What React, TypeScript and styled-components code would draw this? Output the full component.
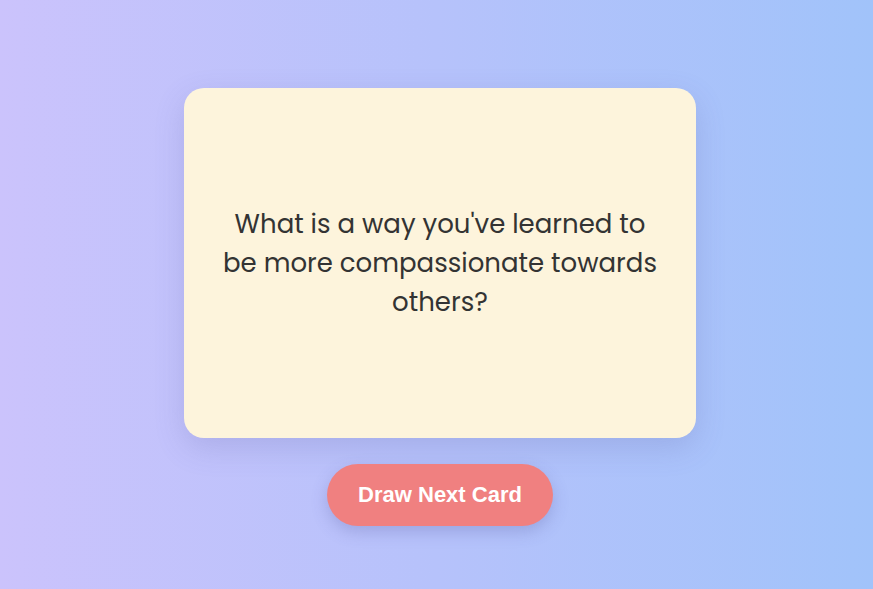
import React from "react";
import styled, { createGlobalStyle } from "styled-components";

const Global = createGlobalStyle`
  html, body { margin: 0; padding: 0; }
  body {
    min-height: 100vh;
    background: linear-gradient(to right, #cbc3fc 0%, #b6c2fb 50%, #a1c3fa 100%);
    font-family: "Poppins", "Open Sans", sans-serif;
  }
`;

const Page = styled.main`
  box-sizing: border-box;
  min-height: 100vh;
  display: flex;
  flex-direction: column;
  align-items: center;
  justify-content: center;
  padding: 25px 0 0 7px;
`;

const Card = styled.section`
  box-sizing: border-box;
  width: 512px;
  height: 350px;
  padding: 0 36px;
  background: #fdf4dc;
  border-radius: 20px;
  box-shadow: 0 10px 30px rgba(90, 90, 160, 0.2);
  display: flex;
  align-items: center;
  justify-content: center;
`;

const Question = styled.p`
  margin: 0;
  text-align: center;
  color: #333;
  font-size: 26px;
  line-height: 39px;
  font-weight: 400;
`;

const DrawButton = styled.button`
  margin-top: 26px;
  width: 226px;
  height: 62px;
  border: none;
  border-radius: 31px;
  background: #f08080;
  color: #fff;
  font-family: "Liberation Sans", Arial, sans-serif;
  font-weight: 700;
  font-size: 22px;
  cursor: pointer;
  box-shadow: 0 6px 16px rgba(80, 80, 150, 0.25);
`;

export default function App() {
  return (
    <>
      <Global />
      <Page>
        <Card>
          <Question>
            What is a way you've learned to be more compassionate towards others?
          </Question>
        </Card>
        <DrawButton>Draw Next Card</DrawButton>
      </Page>
    </>
  );
}
